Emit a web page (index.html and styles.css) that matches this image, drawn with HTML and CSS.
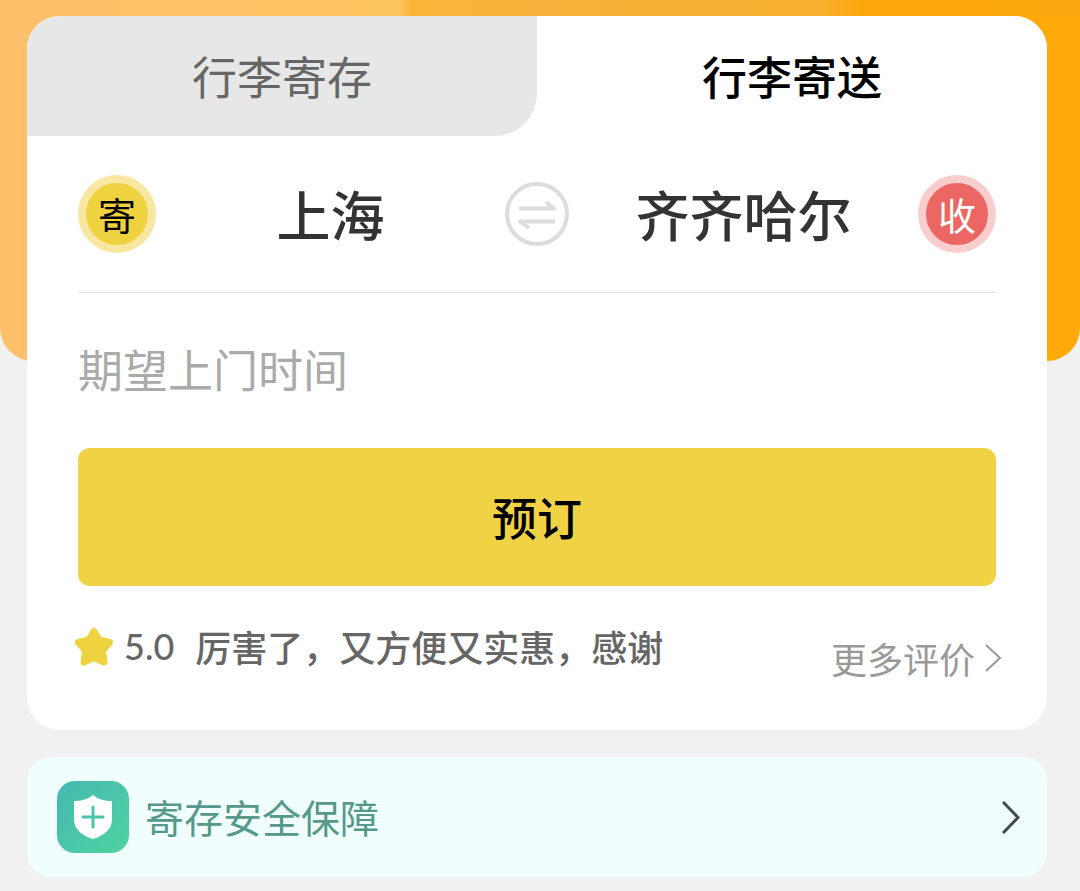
FILE: index.html
```html
<!DOCTYPE html>
<html lang="zh-CN">
<head>
<meta charset="utf-8">
<meta name="viewport" content="width=device-width, initial-scale=1">
<title>行李寄送</title>
<link rel="stylesheet" href="styles.css">
</head>
<body>
<div class="page">
  <div class="banner"><div class="banner-photo"></div></div>
  <main class="content">
    <section class="card">
      <div class="tabs" role="tablist">
        <button class="tab" type="button" role="tab" aria-selected="false">行李寄存</button>
        <button class="tab tab-active" type="button" role="tab" aria-selected="true">行李寄送</button>
      </div>
      <form class="booking">
        <div class="route">
          <span class="badge badge-from">寄</span>
          <button class="city" type="button">上海</button>
          <button class="swap" type="button" aria-label="交换城市">
            <svg viewBox="0 0 64 64" fill="none" stroke="#dcdcdc">
              <circle cx="32" cy="32" r="30" stroke-width="4"/>
              <path d="M14 26.500H49L41 20M50 39.500H15L24 46" stroke-width="4" stroke-linejoin="round"/>
            </svg>
          </button>
          <button class="city" type="button">齐齐哈尔</button>
          <span class="badge badge-to">收</span>
        </div>
        <input class="time" type="text" placeholder="期望上门时间" aria-label="期望上门时间">
        <button class="submit" type="button">预订</button>
      </form>
      <div class="review">
        <svg class="star" viewBox="0 0 40 40" fill="#efd240" stroke="#efd240" stroke-width="7" stroke-linejoin="round">
          <path d="M20 4.500L25 13L35.500 15.500L28.500 23.500L30 35L20 30.500L10 35L11.500 23.500L4.500 15.500L15 13Z"/>
        </svg>
        <span class="score">5.0</span>
        <span class="comment">厉害了，又方便又实惠，感谢</span>
        <a class="more" href="#reviews">更多评价<svg class="more-arrow" viewBox="0 0 18 28" fill="none" stroke="#999" stroke-width="2"><path d="M2 1L16 14L2 27"/></svg></a>
      </div>
    </section>
    <a class="safety" href="#safety">
      <svg class="shield" viewBox="0 0 72 72">
        <defs>
          <linearGradient id="mint" x1="0" y1="0" x2="1" y2="1">
            <stop offset="0" stop-color="#45b8b2"/>
            <stop offset="1" stop-color="#4fd3a0"/>
          </linearGradient>
        </defs>
        <rect width="72" height="72" rx="18" fill="url(#mint)"/>
        <path d="M36 14Q43 20 55 20V38Q55 52 36 58Q17 52 17 38V20Q29 20 36 14Z" fill="#fff"/>
        <path d="M36 26V46M26 36H46" stroke="#4ac4aa" stroke-width="3" stroke-linecap="round"/>
      </svg>
      <span class="safety-text">寄存安全保障</span>
      <svg class="safety-arrow" viewBox="0 0 18 33" fill="none" stroke="#444b4d" stroke-width="3"><path d="M1 1L16 16.500L1 32"/></svg>
    </a>
  </main>
</div>
</body>
</html>
```
FILE: styles.css
```css
* { box-sizing: border-box; }

body {
  margin: 0;
  background: #f1f1f1;
  font-family: "Noto Sans CJK SC", "Noto Sans", sans-serif;
  color: #333;
}

button, input {
  margin: 0;
  padding: 0;
  border: 0;
  background: none;
  font: inherit;
  color: inherit;
}

a { color: inherit; text-decoration: none; }
svg { display: block; flex: none; }

.page { display: grid; }
.banner, .content { grid-area: 1 / 1; min-width: 0; }

.banner {
  align-self: start;
  height: 361px;
  overflow: hidden;
  border-radius: 0 0 33px 33px;
  background: linear-gradient(90deg, #ffc06b 0 50%, #ffaa08 50%);
}

.banner-photo {
  height: 16px;
  background: linear-gradient(90deg, #ffc068 0, #ffc363 30%, #fdc45c 37%, #fbb43a 38%, #f6b23c 50%, #f9b02f 76%, #fda50a 80%, #fba60f 100%);
}

.content {
  display: flex;
  flex-direction: column;
  gap: 27px;
  padding: 16px 33px 14px 27px;
}

.card {
  overflow: hidden;
  border-radius: 33px;
  background: #fff;
}

.tabs { display: grid; grid-template-columns: 1fr 1fr; }

.tab {
  height: 120px;
  border-radius: 0 0 42px 0;
  background: #e7e7e7;
  color: #666;
  font-size: 45px;
  line-height: 60px;
}

.tab-active { background: #fff; color: #000; font-weight: 500; }

.booking { display: flex; flex-direction: column; padding: 0 51px; }

.route {
  display: grid;
  grid-template-columns: 78px 1fr 64px 1fr 78px;
  align-items: center;
  padding: 39px 0;
  border-bottom: 1px solid #e2e2e2;
}

.badge {
  display: flex;
  align-items: center;
  justify-content: center;
  height: 78px;
  border: 8px solid;
  border-radius: 50%;
  font-size: 38px;
  line-height: 60px;
}

.badge-from { border-color: #f7e7a0; background: #efd240; color: #000; }
.badge-to { border-color: #f8cdcd; background: #ec6764; color: #fff; }

.city { font-size: 54px; line-height: 78px; font-weight: 500; }
.swap svg { width: 64px; height: 64px; }

.time { width: 100%; height: 155px; padding-bottom: 4px; font-size: 45px; outline: 0; }
.time::placeholder { color: #aaa; opacity: 1; }

.submit {
  height: 138px;
  padding-bottom: 2px;
  border-radius: 12px;
  background: #f0d344;
  color: #000;
  font-size: 45px;
  font-weight: 500;
}

.review {
  display: flex;
  align-items: flex-start;
  padding: 34px 45px 46px 47px;
  color: #666;
  font-size: 36px;
  line-height: 52px;
}

.star { width: 40px; height: 40px; margin-top: 7px; }
.score { margin-left: 10px; font-family: Lato, "Noto Sans", sans-serif; font-weight: 500; }
.comment { margin-left: 21px; font-weight: 500; }

.more {
  display: flex;
  align-items: center;
  gap: 9px;
  margin: 12px 0 0 auto;
  color: #999;
}

.more-arrow { width: 18px; height: 28px; }

.safety {
  display: flex;
  align-items: center;
  height: 120px;
  padding: 0 27px 0 30px;
  border-radius: 24px;
  background: #f0fffe;
  color: #56998a;
  font-size: 39px;
}

.shield { width: 72px; height: 72px; }
.safety-text { margin-left: 16px; padding-bottom: 2px; }
.safety-arrow { width: 18px; height: 33px; margin-left: auto; }
```
